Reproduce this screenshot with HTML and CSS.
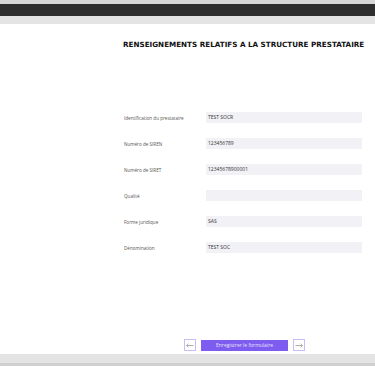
FILE: index.html
```html
<!DOCTYPE html>
<html lang="fr">
<head>
<meta charset="UTF-8" />
<meta name="viewport" content="width=device-width, initial-scale=1.0" />
<title>Renseignements prestataire</title>
<link rel="stylesheet" href="styles.css">
</head>
<body>
<!-- ------ TOP BARS ------ -->
<div class="topbar"></div>
<div class="subbar"></div>

<main class="page">
  <h1 class="title">RENSEIGNEMENTS RELATIFS A LA STRUCTURE PRESTATAIRE</h1>

  <!-- ------ FORM ROWS ------ -->
  <form class="form">
    <div class="row">
      <label class="label">Identification du prestataire</label>
      <div class="field">TEST SOCR</div>
    </div>
    <div class="row">
      <label class="label">Numéro de SIREN</label>
      <div class="field">123456789</div>
    </div>
    <div class="row">
      <label class="label">Numéro de SIRET</label>
      <div class="field">12345678900001</div>
    </div>
    <div class="row">
      <label class="label">Qualité</label>
      <div class="field"></div>
    </div>
    <div class="row">
      <label class="label">Forme juridique</label>
      <div class="field">SAS</div>
    </div>
    <div class="row">
      <label class="label">Dénomination</label>
      <div class="field">TEST SOC</div>
    </div>
  </form>

  <!-- ------ ACTIONS ------ -->
  <div class="actions">
    <button class="nav-btn" type="button" aria-label="Précédent">
      <svg width="8" height="5" viewBox="0 0 8 5"><path d="M0.5 2.5H7.5M0.5 2.5L2.5 0.8M0.5 2.5L2.5 4.2" stroke="#999" stroke-width="0.8" fill="none"/></svg>
    </button>
    <button class="save-btn" type="button">Enregistrer le formulaire</button>
    <button class="nav-btn" type="button" aria-label="Suivant">
      <svg width="8" height="5" viewBox="0 0 8 5"><path d="M0.5 2.5H7.5M7.5 2.5L5.5 0.8M7.5 2.5L5.5 4.2" stroke="#999" stroke-width="0.8" fill="none"/></svg>
    </button>
  </div>
</main>

<footer class="bottombar"></footer>
</body>
</html>
```

FILE: styles.css
```css
/* ---------- Global ---------- */
:root {
  --field-bg: #f1f1f6;
  --purple: #7e5cf0;
  --font-ui: "Open Sans", "Noto Sans", sans-serif;
}

body {
  margin: 0;
  height: 366px;
  display: flex;
  flex-direction: column;
  font-family: var(--font-ui);
  color: #333;
  background: #fff;
  overflow: hidden;
}

/* ---------- Top bars ---------- */
.topbar {
  height: 12px;
  background: #2e2e2e;
  border-top: 4px solid #d6d6d6;
}
.subbar {
  height: 8px;
  background: #e4e4e4;
}

/* ---------- Content ---------- */
.page {
  flex: 1;
  display: flex;
  flex-direction: column;
  padding: 0 13px 0 123px;
}

.title {
  margin: 16px -2px 0 0;
  font-family: "DejaVu Sans", Verdana, sans-serif;
  font-size: 7.2px;
  line-height: 9px;
  font-weight: 700;
  color: #111;
  text-align: right;
  white-space: nowrap;
}

.form {
  display: flex;
  flex-direction: column;
  gap: 15px;
  margin-top: 63px;
}

.row {
  display: flex;
  align-items: center;
  height: 11px;
}
.label {
  width: 82px;
  padding-left: 1px;
  font-size: 4.6px;
  color: #555;
}
.field {
  flex: 1;
  height: 11px;
  line-height: 11px;
  padding-left: 2px;
  background: var(--field-bg);
  font-size: 5px;
  color: #333;
}

/* ---------- Buttons ---------- */
.actions {
  margin-top: auto;
  margin-bottom: 3px;
  display: flex;
  align-items: center;
  gap: 5px;
  padding-left: 61px;
}
.nav-btn {
  width: 12px;
  height: 12px;
  padding: 0;
  border: 1px solid #c9bdf7;
  background: #fff;
  display: flex;
  align-items: center;
  justify-content: center;
}
.save-btn {
  width: 87px;
  height: 11px;
  padding: 0;
  border: none;
  background: var(--purple);
  color: #e8e2ff;
  font-family: var(--font-ui);
  font-size: 5px;
}

/* ---------- Bottom bar ---------- */
.bottombar {
  height: 9px;
  background: #e4e4e4;
  border-bottom: 3px solid #cfcfcf;
}
```
